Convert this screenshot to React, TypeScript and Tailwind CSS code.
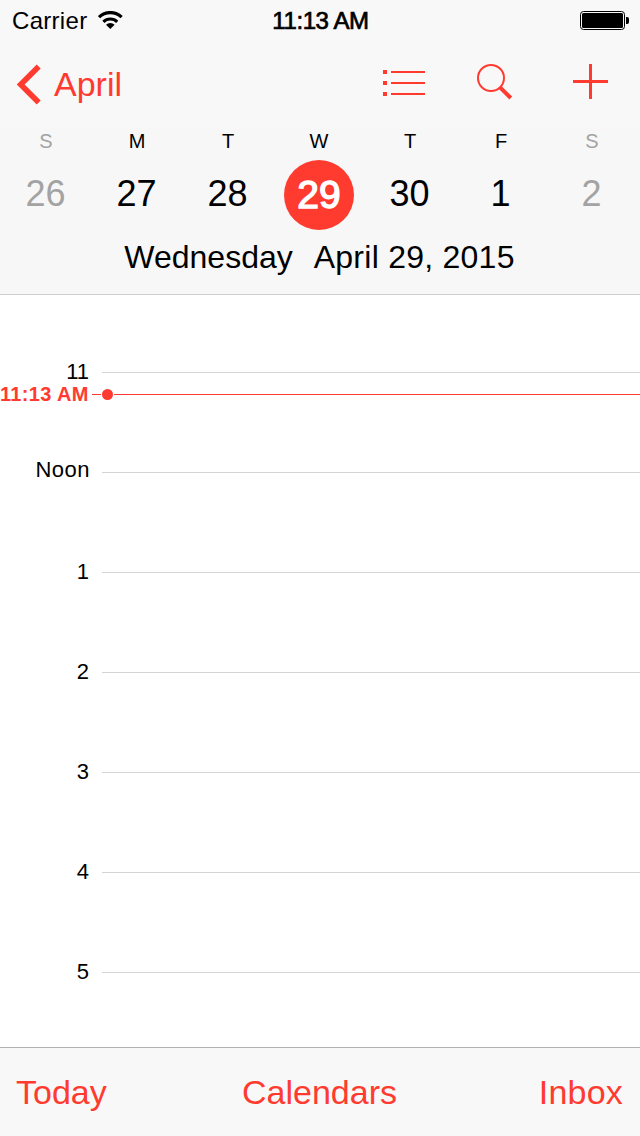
const days = [
  { name: "S", date: "26", muted: true },
  { name: "M", date: "27" },
  { name: "T", date: "28" },
  { name: "W", date: "29", selected: true },
  { name: "T", date: "30" },
  { name: "F", date: "1" },
  { name: "S", date: "2", muted: true },
];

const hours = ["11", "Noon", "1", "2", "3", "4", "5"];

function StatusBar() {
  return (
    <div className="grid h-[41px] grid-cols-3 items-center bg-[#f8f8f8] pr-[11px] pl-3 text-2xl leading-[41px] text-black">
      <div className="flex items-center gap-[11px]">
        <span className="tracking-[0.3px]">Carrier</span>
        <svg width="26" height="19" viewBox="0 0 26 19" className="block">
          <path d="M1 6.200a16 16 0 0 1 22.600 0" fill="none" stroke="#000" strokeWidth="3.200" />
          <path d="M5.400 10.900a9.700 9.700 0 0 1 13.800 0" fill="none" stroke="#000" strokeWidth="3" />
          <path d="M12.300 18l-4.300-4.300a6 6 0 0 1 8.600 0z" fill="#000" />
        </svg>
      </div>
      <div className="text-center tracking-[-0.4px] whitespace-nowrap [-webkit-text-stroke:0.7px_#000]">11:13 AM</div>
      <div className="flex justify-end">
        <svg width="49" height="19" viewBox="0 0 49 19" className="block">
          <rect x="0.5" y="0.5" width="44" height="18" rx="3" fill="none" stroke="#000" />
          <rect x="2" y="2" width="41" height="15" rx="1.5" fill="#000" />
          <path d="M46 6h1.200a1.800 2 0 0 1 1.800 2v3a1.800 2 0 0 1-1.800 2H46z" fill="#000" />
        </svg>
      </div>
    </div>
  );
}

function NavBar() {
  return (
    <div className="flex h-[87px] items-start justify-between bg-[#f8f8f8] pr-8 pl-4 text-[#ff3b30]">
      <button className="flex items-start">
        <svg width="26" height="41" viewBox="0 0 26 41" className="mt-[23px] block">
          <path d="M22.700 2.600 4.700 20.500l18 17.900" fill="none" stroke="currentColor" strokeWidth="5.600" />
        </svg>
        <span className="mt-[23px] ml-3 text-[34px] leading-10">April</span>
      </button>
      <div className="flex items-start">
        <svg width="42" height="26" viewBox="0 0 42 26" className="mt-[29px] block" fill="currentColor">
          <path d="M0 0h4v4H0zM8 1h34v2H8zM0 11h4v4H0zM8 12h34v2H8zM0 22h4v4H0zM8 23h34v2H8z" />
        </svg>
        <svg width="36" height="36" viewBox="0 0 36 36" className="mt-[23px] ml-[52px] block" fill="none" stroke="currentColor">
          <circle cx="14" cy="14" r="13" strokeWidth="2" />
          <path d="M23 23.300 33.800 34" strokeWidth="4" />
        </svg>
        <svg width="35" height="35" viewBox="0 0 35 35" className="mt-[23px] ml-[60px] block" fill="currentColor">
          <path d="M16 0h3v16h16v3H19v16h-3V19H0v-3h16z" />
        </svg>
      </div>
    </div>
  );
}

function WeekStrip() {
  return (
    <div className="grid w-[637px] grid-cols-7">
      {days.map((day, i) => (
        <div key={i} className={day.muted ? "flex flex-col items-center text-[#a3a3a3]" : "flex flex-col items-center text-black"}>
          <div className="h-8 pl-px text-xl leading-[27px]">{day.name}</div>
          {day.selected ? (
            <div className="size-[70px] rounded-full bg-[#ff3b30] pl-px text-center text-[39px] leading-[69px] text-white [-webkit-text-stroke:1.4px_#fff]">
              {day.date}
            </div>
          ) : (
            <div className="h-[70px] text-4xl leading-[68px]">{day.date}</div>
          )}
        </div>
      ))}
    </div>
  );
}

export default function App() {
  return (
    <div className="flex h-[1136px] w-[640px] flex-col overflow-hidden bg-white font-['Liberation_Sans',Arial,sans-serif]">
      <header className="h-[295px] shrink-0 border-b border-[#cfcfcf] bg-[#f7f7f7]">
        <StatusBar />
        <NavBar />
        <WeekStrip />
        <div className="flex justify-center gap-[21px] pr-px text-[32px] leading-[54px] text-black">
          <span>Wednesday</span>
          <span className="tracking-[0.25px]">April 29, 2015</span>
        </div>
      </header>

      <main className="relative flex-1 overflow-hidden pt-[27px]">
        {hours.map((hour) => (
          <div key={hour} className="flex h-[100px] items-start">
            <div
              className={
                hour === "Noon"
                  ? "mt-[35px] w-[90px] text-right text-[22px] leading-[26px] tracking-[0.5px] text-black"
                  : "mt-[37px] w-[89px] text-right text-[22px] leading-[26px] text-black"
              }
            >
              {hour}
            </div>
            <div className={hour === "Noon" ? "mt-[50px] ml-3 h-px flex-1 bg-[#d4d4d4]" : "mt-[50px] ml-[13px] h-px flex-1 bg-[#d4d4d4]"} />
          </div>
        ))}
        <div className="absolute top-[87px] left-0 flex h-6 w-full items-center text-[#ff3b30]">
          <span className="w-[92px] text-[20px] leading-6 font-bold tracking-[0.35px] whitespace-nowrap">11:13 AM</span>
          <span className="h-px w-[9px] bg-[#ff3b30]" />
          <span className="mx-px size-[11px] rounded-full bg-[#ff3b30]" />
          <span className="h-px flex-1 bg-[#ff3b30]" />
        </div>
      </main>

      <footer className="grid h-[89px] shrink-0 grid-cols-[1fr_auto_1fr] border-t border-[#b2b2b2] bg-[#f8f8f8] pr-[17px] pl-4 text-[34px] leading-[88px] text-[#ff3b30]">
        <button className="text-left">Today</button>
        <button>Calendars</button>
        <button className="text-right tracking-[0.2px]">Inbox</button>
      </footer>
    </div>
  );
}
